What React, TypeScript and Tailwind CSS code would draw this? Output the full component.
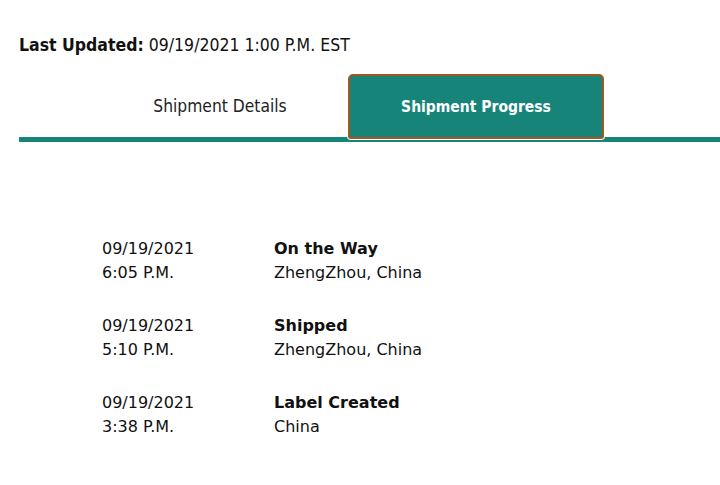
export default function App() {
  const events = [
    { date: "09/19/2021", time: "6:05 P.M.", status: "On the Way", place: "ZhengZhou, China" },
    { date: "09/19/2021", time: "5:10 P.M.", status: "Shipped", place: "ZhengZhou, China" },
    { date: "09/19/2021", time: "3:38 P.M.", status: "Label Created", place: "China" },
  ];

  return (
    <div className="w-[720px] h-[485px] bg-white text-[#111] font-['DejaVu_Sans',Verdana,sans-serif]">
      <div className="pl-[19px] pt-[34px] text-[17.5px] leading-[22px] font-['DejaVu_Sans_Condensed','DejaVu_Sans',sans-serif]">
        <span className="font-bold">Last Updated:</span> 09/19/2021 1:00 P.M. EST
      </div>

      <div className="ml-[19px] mt-[18px] flex border-b-[5px] border-[#17847a] font-['DejaVu_Sans_Condensed','DejaVu_Sans',sans-serif]">
        <button className="ml-[73px] w-[256px] h-[63px] pt-[2px] text-[17.3px] text-[#222] flex items-center justify-center">
          Shipment Details
        </button>
        <button className="w-[256px] h-[65px] -mb-[2px] pt-[2px] rounded-t-[5px] rounded-b-[3px] border-2 border-[#a4561f] bg-[#17847a] text-white font-bold text-[15.5px] flex items-center justify-center shadow-[0_0_0_1px_#fff]">
          Shipment Progress
        </button>
      </div>

      <div className="pl-[102px] pt-[95px] flex flex-col gap-[29px] text-[16px] leading-[24px]">
        {events.map((e, i) => (
          <div key={i} className="flex">
            <div className="w-[172px]">
              <div>{e.date}</div>
              <div>{e.time}</div>
            </div>
            <div>
              <div className="font-bold">{e.status}</div>
              <div>{e.place}</div>
            </div>
          </div>
        ))}
      </div>
    </div>
  );
}
